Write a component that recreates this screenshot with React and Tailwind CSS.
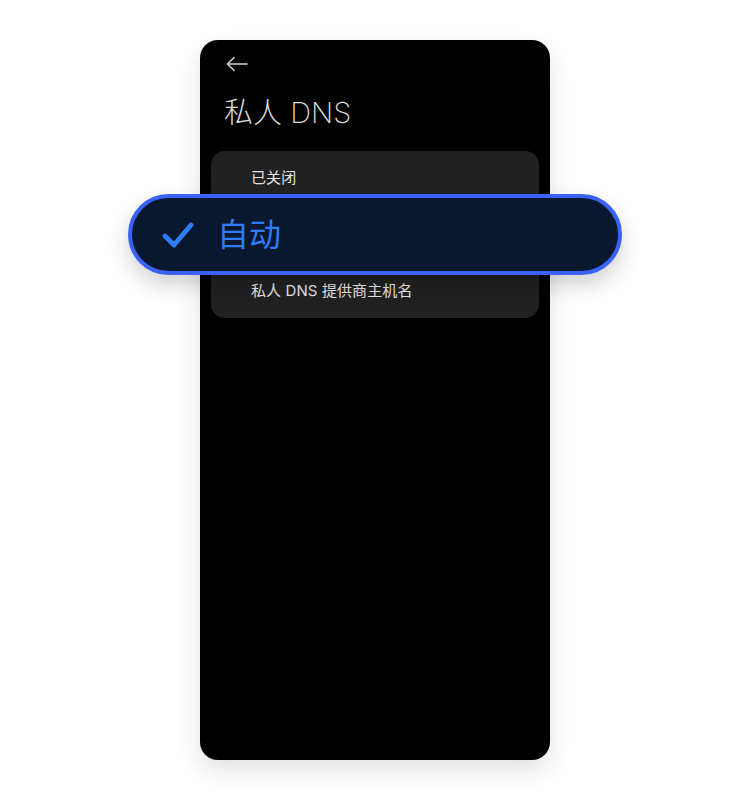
import React from 'react'

const font = { fontFamily: 'Inter, "Noto Sans CJK SC", sans-serif' }

function BackArrow() {
  return (
    <svg className="h-[16px] w-[22px] text-[#cfcfcf]" viewBox="0 0 22 16" fill="none">
      <path d="M21 8H2M8 1.5L1.5 8L8 14.5" stroke="currentColor" strokeWidth="1.6" strokeLinecap="round" strokeLinejoin="round" />
    </svg>
  )
}

function Check() {
  return (
    <svg className="h-[28px] w-[32px] text-[#2f7df6]" viewBox="0 0 32 28" fill="none">
      <path d="M3 15L12 24L29 4" stroke="currentColor" strokeWidth="4.8" strokeLinecap="round" strokeLinejoin="round" />
    </svg>
  )
}

export default function App() {
  return (
    <div className="flex min-h-[800px] w-full justify-center bg-white pt-[40px]" style={font}>
      <div className="relative h-[720px] w-[350px] rounded-[18px] bg-black shadow-[0_10px_24px_rgba(0,0,0,0.12)]">
        <div className="px-[26px] pt-[16px]">
          <BackArrow />
        </div>
        <h1 className="mt-[23px] px-[24px] text-[29px] font-extralight leading-[36px] text-[#dcdcdc]">
          私人 DNS
        </h1>

        <div className="relative mx-[11px] mt-[20px] flex flex-col rounded-[14px] bg-[#212121]">
          <div className="flex h-[52px] items-center px-[40px] pt-[2px] text-[15px] tracking-[0.1px] text-[#e6e6e6]">已关闭</div>
          {/* middle row sits under the highlighted pill */}
          <div className="h-[63px]" />
          <div className="flex h-[52px] items-center px-[40px] pb-[2px] text-[15px] tracking-[0.1px] text-[#e6e6e6]">私人 DNS 提供商主机名</div>

          <div className="absolute left-[-83px] top-[43px] flex h-[81px] w-[494px] items-center gap-[23px] rounded-full border-[4px] border-[#3a62f6] bg-[#09172f] pl-[30px] shadow-[0_10px_22px_rgba(0,0,0,0.18)]">
            <Check />
            <span className="text-[32px] font-normal leading-none text-[#2f7df6]">自动</span>
          </div>
        </div>
      </div>
    </div>
  )
}
